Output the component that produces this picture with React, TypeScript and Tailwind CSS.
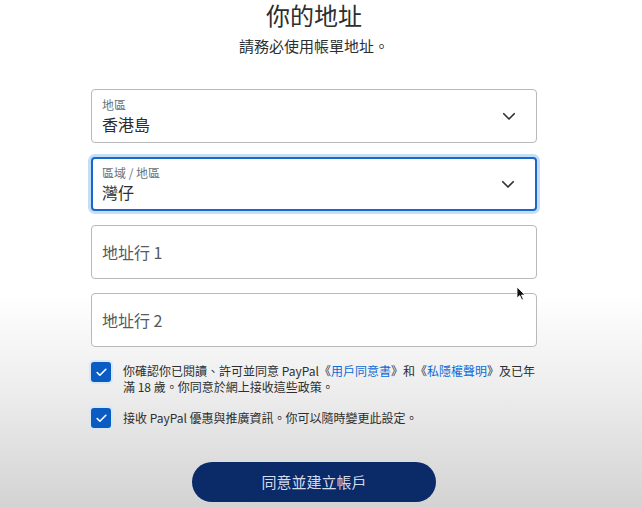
import { Check } from "lucide-react";

const font = { fontFamily: '"Noto Sans CJK TC", "Noto Sans", sans-serif' };

const Chevron = () => (
  <svg width="18" height="18" viewBox="0 0 24 24" fill="none" stroke="#2c2e2f" strokeWidth="2.2" strokeLinecap="round" strokeLinejoin="round">
    <path d="M5 9l7 7 7-7" />
  </svg>
);

const SelectField = ({ label, value, focused }: { label: string; value: string; focused?: boolean }) => (
  <div
    className={`h-[54px] rounded-[4px] bg-white flex items-center justify-between pr-[18px] ${
      focused
        ? "border-2 border-[#1a66cf] shadow-[0_0_0_3px_#c4def6] pl-[9px]"
        : "border border-[#b7b9bb] pl-[10px]"
    }`}
  >
    <div className="flex flex-col">
      <span className="text-[12px] leading-[16px] text-[#6c7378]">{label}</span>
      <span className="text-[16px] leading-[22px] text-[#2c2e2f]">{value}</span>
    </div>
    <Chevron />
  </div>
);

const TextField = ({ placeholder }: { placeholder: string }) => (
  <div className="h-[54px] rounded-[4px] bg-white border border-[#b7b9bb] flex items-center pl-[10px]">
    <span className="text-[16px] leading-[22px] text-[#555a5e]">{placeholder}</span>
  </div>
);

const Box = () => (
  <div className="w-[20px] h-[20px] shrink-0 rounded-[3px] bg-[#0a5cc2] flex items-center justify-center shadow-[0_0_0_2px_#d7e8f7]">
    <Check className="w-[13px] h-[13px] text-white" strokeWidth={3} />
  </div>
);

export default function App() {
  return (
    <div
      className="relative w-[642px] h-[507px] overflow-hidden bg-[linear-gradient(to_bottom,#ffffff_0%,#ffffff_58%,#ececec_78%,#d3d3d3_100%)]"
      style={font}
    >
      <div className="w-[446px] ml-[91px] flex flex-col">
        <h1 className="pt-[1px] text-center text-[24px] leading-[28px] font-normal text-[#2c2e2f]">你的地址</h1>
        <p className="mt-[7px] text-center text-[15px] leading-[20px] text-[#2c2e2f]">請務必使用帳單地址。</p>

        <div className="mt-[33px] flex flex-col gap-[14px]">
          <SelectField label="地區" value="香港島" />
          <SelectField label="區域 / 地區" value="灣仔" focused />
          <TextField placeholder="地址行 1" />
          <TextField placeholder="地址行 2" />
        </div>

        <div className="mt-[15px] flex gap-[12px]">
          <Box />
          <p className="flex-1 text-[12px] leading-[16px] text-[#2c2e2f] pt-[1px]">
            你確認你已閱讀、許可並同意 PayPal《<span className="text-[#0b6ad6]">用戶同意書</span>》和《<span className="text-[#0b6ad6]">私隱權聲明</span>》及已年滿 18 歲。你同意於網上接收這些政策。
          </p>
        </div>

        <div className="mt-[13px] flex items-center gap-[12px]">
          <Box />
          <p className="text-[12px] leading-[16px] text-[#2c2e2f]">接收 PayPal 優惠與推廣資訊。你可以隨時變更此設定。</p>
        </div>

        <div className="mt-[34px] flex justify-center">
          <button className="w-[244px] h-[40px] rounded-full bg-[#0a2a68] text-[15px] text-[#d4dcec]">同意並建立帳戶</button>
        </div>
      </div>

      <svg className="absolute left-[516px] top-[286px]" width="10" height="15" viewBox="0 0 10 15">
        <path d="M1 1 L1 12 L3.8 9.6 L5.8 14 L7.4 13.3 L5.5 9 L9 9 Z" fill="#111" stroke="#fff" strokeWidth="0.8" />
      </svg>
    </div>
  );
}
